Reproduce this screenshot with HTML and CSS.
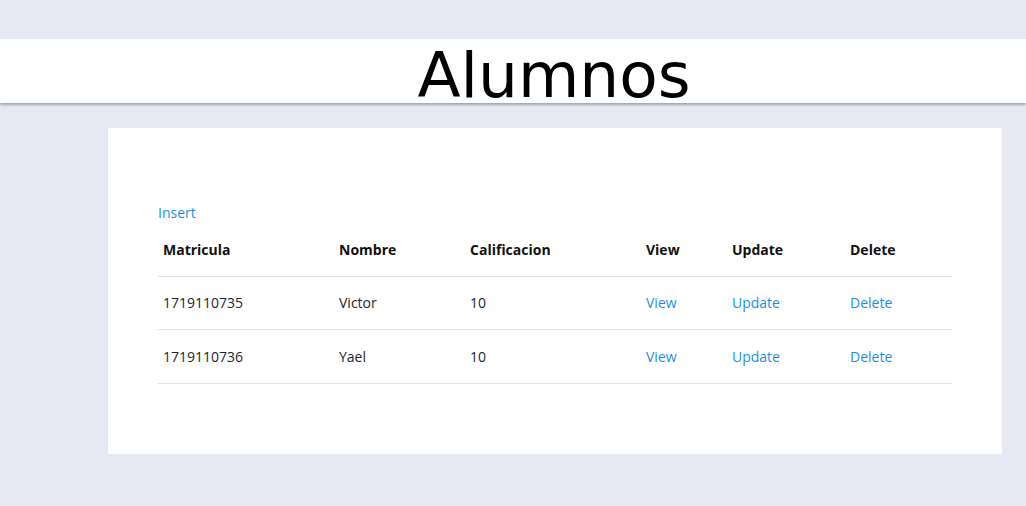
FILE: index.html
```html
<!DOCTYPE html>
<html lang="es">
<head>
<meta charset="utf-8">
<title>Alumnos</title>
<link rel="stylesheet" href="styles.css">
</head>
<body>
<header class="topbar">
  <h1 class="title">Alumnos</h1>
</header>
<main class="card">
  <a class="link insert" href="#">Insert</a>
  <table class="grid">
    <colgroup>
      <col class="c1"><col class="c2"><col class="c3"><col class="c4"><col class="c5"><col class="c6">
    </colgroup>
    <thead>
      <tr><th>Matricula</th><th>Nombre</th><th>Calificacion</th><th>View</th><th>Update</th><th>Delete</th></tr>
    </thead>
    <tbody>
      <tr><td>1719110735</td><td>Victor</td><td>10</td><td><a class="link" href="#">View</a></td><td><a class="link" href="#">Update</a></td><td><a class="link" href="#">Delete</a></td></tr>
      <tr><td>1719110736</td><td>Yael</td><td>10</td><td><a class="link" href="#">View</a></td><td><a class="link" href="#">Update</a></td><td><a class="link" href="#">Delete</a></td></tr>
    </tbody>
  </table>
</main>
</body>
</html>
```

FILE: styles.css
```css
html, body {
  margin: 0;
  padding: 0;
}
body {
  background: #e6e8f4;
  font-family: "Open Sans", "Noto Sans", sans-serif;
  font-size: 14px;
  color: #212529;
  padding-top: 39px;
  min-height: 506px;
  box-sizing: border-box;
}
.topbar {
  background: #ffffff;
  height: 64px;
  box-sizing: border-box;
  box-shadow: 0 2px 2px rgba(0, 0, 0, 0.28);
  padding-left: 82px;
  text-align: center;
}
.title {
  margin: 0;
  padding-top: 10px;
  font-family: "DejaVu Sans", Verdana, sans-serif;
  font-weight: normal;
  font-size: 63px;
  line-height: 54px;
  color: #000;
}
.card {
  background: #ffffff;
  margin: 25px 24px 0 108px;
  padding: 75px 50px 70px 50px;
}
.link {
  color: #1a8fe3;
  text-decoration: none;
}
.insert {
  display: block;
  line-height: 20px;
}
.grid {
  width: 794px;
  border-collapse: collapse;
  table-layout: fixed;
}
.c1 { width: 176px; }
.c2 { width: 131px; }
.c3 { width: 176px; }
.c4 { width: 86px; }
.c5 { width: 118px; }
.c6 { width: 107px; }
.grid th, .grid td {
  text-align: left;
  padding: 0 5px;
  height: 53px;
  line-height: 20px;
  border-bottom: 1px solid #dee2e6;
  vertical-align: middle;
}
.grid td {
  height: 52px;
}
.grid tbody tr:last-child td {
  height: 53px;
}
.grid th {
  font-weight: 700;
  color: #111;
}
```
